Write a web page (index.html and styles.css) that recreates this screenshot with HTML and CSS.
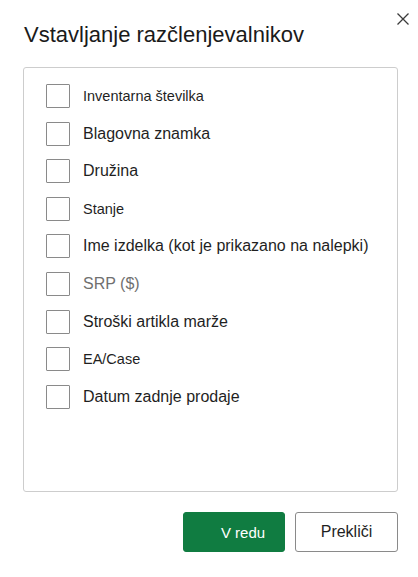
FILE: index.html
```html
<!DOCTYPE html>
<html>
<head>
<meta charset="utf-8">
<link rel="stylesheet" href="styles.css">
</head>
<body>
<div class="dialog">
  <button class="close" aria-label="Zapri">
    <svg width="12" height="12" viewBox="0 0 12 12"><path d="M0.5 0.5 L11.5 11.5 M11.5 0.5 L0.5 11.5" stroke="#3b3b3b" stroke-width="1.3" fill="none"/></svg>
  </button>
  <h1 class="title">Vstavljanje razčlenjevalnikov</h1>
  <div class="list">
    <label class="row"><span class="box"></span><span class="lbl small">Inventarna številka</span></label>
    <label class="row"><span class="box"></span><span class="lbl">Blagovna znamka</span></label>
    <label class="row"><span class="box"></span><span class="lbl">Družina</span></label>
    <label class="row"><span class="box"></span><span class="lbl small">Stanje</span></label>
    <label class="row"><span class="box"></span><span class="lbl">Ime izdelka (kot je prikazano na nalepki)</span></label>
    <label class="row"><span class="box"></span><span class="lbl muted">SRP ($)</span></label>
    <label class="row"><span class="box"></span><span class="lbl">Stroški artikla marže</span></label>
    <label class="row"><span class="box"></span><span class="lbl small">EA/Case</span></label>
    <label class="row"><span class="box"></span><span class="lbl">Datum zadnje prodaje</span></label>
  </div>
  <div class="actions">
    <button class="btn primary">V redu</button>
    <button class="btn secondary">Prekliči</button>
  </div>
</div>
</body>
</html>
```
FILE: styles.css
```css
html, body {
  margin: 0;
  padding: 0;
  background: #ffffff;
}
body {
  font-family: "Liberation Sans", Arial, sans-serif;
  color: #1f1f1f;
}
.dialog {
  position: relative;
  width: 418px;
  height: 577px;
  box-sizing: border-box;
  padding: 21px 20px 0 23px;
}
.close {
  position: absolute;
  top: 13px;
  left: 397px;
  width: 12px;
  height: 12px;
  padding: 0;
  border: 0;
  background: transparent;
  display: flex;
}
.title {
  margin: 0;
  font-size: 22px;
  font-weight: normal;
  line-height: 28px;
  color: #1a1a1a;
  padding-left: 1px;
}
.list {
  margin-top: 18px;
  height: 425px;
  box-sizing: border-box;
  border: 1px solid #cdcdcd;
  border-radius: 3px;
  padding: 16px 0 0 22px;
  display: flex;
  flex-direction: column;
  gap: 13.6px;
}
.row {
  display: flex;
  align-items: center;
  height: 24px;
}
.box {
  width: 24px;
  height: 24px;
  box-sizing: border-box;
  border: 1px solid #8a8a8a;
  border-radius: 1px;
  flex: none;
}
.lbl {
  margin-left: 13px;
  font-size: 16px;
  color: #1f1f1f;
  white-space: nowrap;
}
.lbl.small {
  font-size: 14.5px;
}
.lbl.muted {
  color: #707070;
}
.actions {
  display: flex;
  justify-content: flex-end;
  gap: 10px;
  margin-top: 20px;
}
.btn {
  height: 40px;
  box-sizing: border-box;
  border-radius: 3px;
  font-family: "Liberation Sans", Arial, sans-serif;
  font-size: 15px;
  cursor: pointer;
}
.primary {
  width: 102px;
  background: #107c41;
  border: 1px solid #107c41;
  color: #ffffff;
  padding: 0 0 0 18px;
}
.secondary {
  width: 103px;
  background: #ffffff;
  border: 1px solid #8a8a8a;
  color: #1f1f1f;
  padding: 0;
  font-size: 16px;
}
```
